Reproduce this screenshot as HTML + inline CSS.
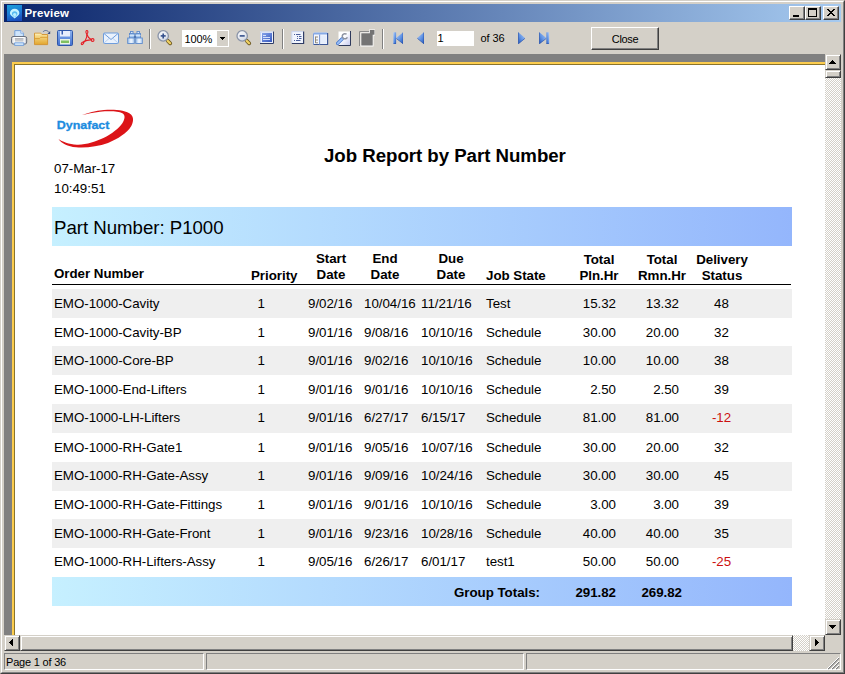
<!DOCTYPE html>
<html><head><meta charset="utf-8"><title>Preview</title>
<style>
*{box-sizing:border-box;margin:0;padding:0}
html,body{width:845px;height:674px;overflow:hidden;background:#d4d0c8}
body{position:relative;font-family:"Liberation Sans",sans-serif;font-size:11px;color:#000}
.abs{position:absolute}
#frame{position:absolute;left:0;top:0;width:845px;height:674px;border-style:solid;border-width:1px;border-color:#d4d0c8 #404040 #404040 #d4d0c8}
#frame2{position:absolute;left:1px;top:1px;width:843px;height:672px;border-style:solid;border-width:1px;border-color:#fff #808080 #808080 #fff}
#title{position:absolute;left:4px;top:4px;width:837px;height:18px;background:linear-gradient(to right,#0a246a,#a6caf0)}
#title .txt{position:absolute;left:20.500px;top:1px;font-weight:bold;font-size:11.500px;line-height:16px;color:#fff;letter-spacing:0.150px}
.cb{position:absolute;top:2px;width:16px;height:14px;background:#d4d0c8;border-style:solid;border-width:1px;border-color:#fff #404040 #404040 #fff;box-shadow:inset -1px -1px 0 #808080}
#tool{position:absolute;left:4px;top:22px;width:837px;height:32px;background:#d4d0c8}
.sep{position:absolute;top:29px;width:2px;height:20px;border-left:1px solid #808080;border-right:1px solid #fff}
.ic{position:absolute;top:30px;width:16px;height:16px}
.inp{position:absolute;background:#fff;border:1px solid #d4d0c8;font-size:11px}
#view{position:absolute;left:4px;top:54px;width:821px;height:581px;background:#808080;overflow:hidden}
#page{position:absolute;left:8px;top:8px;width:900px;height:700px;background:#fff;border:2px solid #fdcd4e;box-shadow:inset 1px 1px 0 #8a742c}
#rep{position:absolute;left:0;top:0;font-size:13.33px;color:#000}
.t{position:absolute;white-space:nowrap;line-height:16px;font-size:13.33px;letter-spacing:-0.03px}
.b{font-weight:bold}
.row{position:absolute;left:52px;width:740px;height:29px}
.g{background:#efefef}
.r{color:#cc1010}
</style></head><body>
<div id="frame"></div><div id="frame2"></div>
<div id="title">
 <svg class="abs" style="left:3px;top:1px" width="15" height="16" viewBox="0 0 15 16"><defs><linearGradient id="ig" x1="0.300" y1="0" x2="0.600" y2="1"><stop offset="0" stop-color="#1a9cd8"/><stop offset="0.500" stop-color="#1d7cd6"/><stop offset="1" stop-color="#1a4cbc"/></linearGradient></defs><rect width="15" height="16" fill="url(#ig)"/><path d="M2.900 8.300a4.750 4.500 0 0 1 9.500 0c0 1.800-2.400 3.200-4.750 5.100C5.300 11.500 2.900 10.100 2.900 8.300z" fill="#c4f2ff"/><path d="M4.900 9a2.750 2.700 0 0 1 5.500 0c0 1.100-1.400 2-2.750 3.300C6.300 11 4.900 10.100 4.900 9z" fill="#58baf0"/><path d="M6 9.600a1.650 1.600 0 0 1 3.300 0c0 .7-.8 1.500-1.650 2.500C6.800 11.100 6 10.300 6 9.600z" fill="#b8eeff"/></svg>
 <div class="txt">Preview</div>
 <div class="cb" style="left:785px"><div class="abs" style="left:3px;top:8px;width:6px;height:2px;background:#000"></div></div>
 <div class="cb" style="left:801px"><div class="abs" style="left:2px;top:1px;width:9px;height:9px;border:1px solid #000;border-top-width:2px"></div></div>
 <div class="cb" style="left:819px"><svg class="abs" style="left:3px;top:2px" width="8" height="7" viewBox="0 0 8 7"><path d="M0 0L7 7M1 0L8 7M7 0L0 7M8 0L1 7" stroke="#000" stroke-width="1" shape-rendering="crispEdges"/></svg></div>
</div>
<div id="tool"></div>
<!--ICONS-->
<svg width="0" height="0" class="abs"><defs><linearGradient id="gb" x1="0" y1="0" x2="1" y2="0"><stop offset="0" stop-color="#7db0f0"/><stop offset="1" stop-color="#1c5cc8"/></linearGradient><linearGradient id="gy" x1="0" y1="0" x2="0" y2="1"><stop offset="0" stop-color="#fbe9a6"/><stop offset="1" stop-color="#e2a52c"/></linearGradient><linearGradient id="gp" x1="0" y1="0" x2="0" y2="1"><stop offset="0" stop-color="#ffffff"/><stop offset="1" stop-color="#b9c6dc"/></linearGradient><linearGradient id="gs" x1="0" y1="0" x2="0" y2="1"><stop offset="0" stop-color="#8fb4ee"/><stop offset="1" stop-color="#3f6fd0"/></linearGradient></defs></svg>
<svg class="abs" style="left:10px;top:30px" width="18" height="16" viewBox="0 0 18 16"><defs><linearGradient id="gpr" x1="0" y1="0" x2="1" y2="0"><stop offset="0" stop-color="#c4c8d0"/><stop offset="0.180" stop-color="#ffffff"/><stop offset="0.820" stop-color="#ffffff"/><stop offset="1" stop-color="#b4b8c2"/></linearGradient></defs><path d="M4.800 7.500V0.600H10.800L13.400 3.200V7.500z" fill="#cfe5fc" stroke="#6c9ad8" stroke-width="0.900"/><path d="M10.800 0.600V3.200H13.400" fill="#eaf4fe" stroke="#6c9ad8" stroke-width="0.700"/><path d="M3 6.500H15.200Q16.700 6.500 16.700 8.500V12Q16.700 14 15.200 14H3Q1.500 14 1.500 12V8.500Q1.500 6.500 3 6.500z" fill="url(#gpr)" stroke="#5c6474" stroke-width="0.900"/><rect x="4.800" y="8.600" width="8.700" height="3" fill="#c6c8cc"/><path d="M4.800 8.600h8.700" stroke="#9a9ea8" stroke-width="0.700"/><path d="M4.600 12.800H13.800V15.400H4.600z" fill="#d4e9fd" stroke="#6c9ad8" stroke-width="0.900"/></svg>
<svg class="abs" style="left:34px;top:29px" width="18" height="17" viewBox="0 0 18 17"><path d="M0.500 4.200H6.800L8 5.500H13.600V15.600H0.500z" fill="url(#gy)" stroke="#d2922c" stroke-width="0.900"/><path d="M0.800 9.600H5.500L6.800 8.300H13.400" fill="none" stroke="#d89a30" stroke-width="0.900"/><path d="M1 5.200H6.500" stroke="#fdf0c0" stroke-width="0.800"/><path d="M9 3C10.200 1 13.200 0.800 15 3.400" fill="none" stroke="#5a6e98" stroke-width="1"/><path d="M16.200 2V5H13.400z" fill="#3a5084"/></svg>
<svg class="abs" style="left:57px;top:30px" width="16" height="16" viewBox="0 0 16 16"><path d="M0.5 1.5a1 1 0 0 1 1-1h13a1 1 0 0 1 1 1v13a1 1 0 0 1-1 1h-13a1 1 0 0 1-1-1z" fill="url(#gs)" stroke="#2f56a8" stroke-width="1"/><rect x="3" y="1" width="10" height="5.5" fill="#e8eefc"/><rect x="4.5" y="1" width="1.5" height="3.5" fill="#3b5fb0"/><rect x="3" y="9" width="10" height="5.5" fill="#e9f3e4"/><rect x="4" y="10.5" width="8" height="2.5" fill="#7fc060"/></svg>
<svg class="abs" style="left:80px;top:30px" width="16" height="16" viewBox="0 0 16 16"><g fill="none" stroke="#e51c23" stroke-width="1.100" stroke-linecap="round"><ellipse cx="6.900" cy="2" rx="1" ry="1.500"/><path d="M6.900 3.500C7.200 6.500 6.600 8.500 5.200 10.800L3.400 12.600"/><path d="M7 4.500C7.800 7.200 9.300 8.800 11.200 9.600"/><path d="M3.800 11.600C6.200 10.300 8.800 9.800 11.200 9.900"/><ellipse cx="2.500" cy="13.300" rx="1.500" ry="0.900" transform="rotate(-45 2.500 13.300)"/><circle cx="12.600" cy="10" r="1.400"/></g></svg>
<svg class="abs" style="left:103px;top:32px" width="16" height="12" viewBox="0 0 16 12"><rect x="0.5" y="1" width="15" height="10.5" rx="1" fill="#eaf2fd" stroke="#6f9ddc" stroke-width="1"/><path d="M1 1.5l7 6l7-6" fill="none" stroke="#6f9ddc" stroke-width="1"/><path d="M1 11l5-4.500M15 11l-5-4.500" fill="none" stroke="#a9c6ee" stroke-width="0.8"/></svg>
<svg class="abs" style="left:126px;top:30px" width="18" height="15" viewBox="0 0 18 15"><defs><linearGradient id="gbn" x1="0" y1="0" x2="1" y2="0"><stop offset="0" stop-color="#9cc0ec"/><stop offset="0.500" stop-color="#f2f8fe"/><stop offset="1" stop-color="#b4d0f2"/></linearGradient></defs><g stroke="#5f8ccc" stroke-width="0.900"><rect x="4.500" y="1.500" width="2.500" height="2" fill="#dcebfb"/><rect x="11" y="1.500" width="2.500" height="2" fill="#dcebfb"/><rect x="3.500" y="3.500" width="4.800" height="4.500" fill="#a4c6ee"/><rect x="9.700" y="3.500" width="4.800" height="4.500" fill="#a4c6ee"/><rect x="1.700" y="8" width="6.600" height="5.500" fill="url(#gbn)"/><rect x="9.700" y="8" width="6.600" height="5.500" fill="url(#gbn)"/></g><rect x="8.300" y="5.500" width="1.400" height="2.500" fill="#3f68a8"/><path d="M3.500 5.500h4.800M9.700 5.500h4.800" stroke="#dcebfb" stroke-width="0.800"/></svg>
<svg class="abs" style="left:156.5px;top:30px" width="16" height="16" viewBox="0 0 16 16"><defs><linearGradient id="gmp" x1="0" y1="0" x2="0.600" y2="1"><stop offset="0" stop-color="#ffffff"/><stop offset="1" stop-color="#d4dae6"/></linearGradient></defs><path d="M10.600 10.700l2.600 2.600" stroke="#6e5a24" stroke-width="3.800" stroke-linecap="round"/><path d="M10.600 10.700l2.500 2.500" stroke="#f0d264" stroke-width="2.200" stroke-linecap="round"/><circle cx="6.200" cy="5.900" r="5.200" fill="url(#gmp)" stroke="#8a94a8" stroke-width="1.300"/><path d="M3.700 5.900h5" stroke="#34508c" stroke-width="1.600"/><path d="M6.200 3.400v5" stroke="#34508c" stroke-width="1.600"/></svg>
<svg class="abs" style="left:236px;top:30px" width="16" height="16" viewBox="0 0 16 16"><defs><linearGradient id="gmm" x1="0" y1="0" x2="0.600" y2="1"><stop offset="0" stop-color="#ffffff"/><stop offset="1" stop-color="#d4dae6"/></linearGradient></defs><path d="M10.600 10.700l2.600 2.600" stroke="#6e5a24" stroke-width="3.800" stroke-linecap="round"/><path d="M10.600 10.700l2.500 2.500" stroke="#f0d264" stroke-width="2.200" stroke-linecap="round"/><circle cx="6.200" cy="5.900" r="5.200" fill="url(#gmm)" stroke="#8a94a8" stroke-width="1.300"/><path d="M3.700 5.900h5" stroke="#34508c" stroke-width="1.600"/></svg>
<svg class="abs" style="left:260px;top:31px" width="15" height="14" viewBox="0 0 15 14"><defs><linearGradient id="gf" x1="0" y1="0" x2="1" y2="1"><stop offset="0" stop-color="#86a4ea"/><stop offset="1" stop-color="#3456be"/></linearGradient></defs><rect x="0" y="0.500" width="14" height="12.500" fill="#eef2fc"/><path d="M13.500 0.500V12.500H0" fill="none" stroke="#2f3c66" stroke-width="1"/><path d="M0.500 12V1H13" fill="none" stroke="#c8d4f0" stroke-width="1"/><rect x="2" y="2" width="10" height="9" fill="url(#gf)"/><path d="M3 4.500h3M3 6.500h7M3 8.500h7" stroke="#d4e0fa" stroke-width="1"/></svg>
<svg class="abs" style="left:291px;top:31px" width="14" height="14" viewBox="0 0 14 14"><rect x="0.700" y="0.500" width="12" height="12" fill="#f0f4fd"/><path d="M12.600 0.500V12.500H0.800" fill="none" stroke="#2f3c66" stroke-width="1.200"/><path d="M0.800 12V0.600H12" fill="none" stroke="#c4d2f0" stroke-width="0.800"/><path d="M3 3.500h1M5 3.500h4.500M6 5.500h1M8 5.500h2.500M6 7.500h1M8 7.500h2.500M3 9.500h1M5 9.500h4.500" stroke="#4a5f9c" stroke-width="1"/></svg>
<svg class="abs" style="left:313px;top:32px" width="16" height="14" viewBox="0 0 16 14"><rect x="0.500" y="0.500" width="14.200" height="12" rx="1" fill="#f4f7fe"/><path d="M0.500 2.500V1.500a1 1 0 0 1 1-1H13.700a1 1 0 0 1 1 1V2.500z" fill="#86aae6"/><path d="M0.500 1.500V12.500" stroke="#7fa0dc" stroke-width="1" fill="none"/><path d="M14.600 1V12.500H0.600" fill="none" stroke="#3c5796" stroke-width="1.200"/><path d="M6.600 2.500v10" stroke="#7f9cd6" stroke-width="1.200"/><path d="M2.500 4.500v6.500M2.500 5h2.500M2.500 8h2.500M2.500 10.800h2.500" stroke="#8a8272" stroke-width="0.900" fill="none"/><rect x="8" y="3.500" width="5.500" height="8" fill="#e6eefc"/></svg>
<svg class="abs" style="left:336px;top:31px" width="16" height="15" viewBox="0 0 16 15"><defs><linearGradient id="gw" x1="0" y1="0" x2="1" y2="1"><stop offset="0.400" stop-color="#ffffff"/><stop offset="1" stop-color="#c4c8ee"/></linearGradient></defs><rect x="2.500" y="0.500" width="12" height="14" fill="url(#gw)"/><path d="M14.500 0V14.500H2.500" fill="none" stroke="#2f3a5c" stroke-width="1"/><path d="M1.600 12.400l4.600-4.600" stroke="#4a7ad0" stroke-width="3.400" stroke-linecap="round"/><path d="M1.700 12.300l4.500-4.500" stroke="#9cc0f6" stroke-width="1.800" stroke-linecap="round"/><path d="M10.600 3.300A2.600 2.600 0 1 0 11.300 6.200" fill="none" stroke="#8c92a0" stroke-width="1.500"/></svg>
<svg class="abs" style="left:359px;top:29px" width="17" height="18" viewBox="0 0 17 18"><path d="M0.500 17V2.500H10" fill="none" stroke="#8c8c8c" stroke-width="1"/><path d="M1.500 3.500H10V0.500H16V6.500H14.500V17.500H1.500z" fill="#fff"/><path d="M2.300 4.300H10.800V1H15.500V5.800H13.700V16.600H2.300z" fill="#747474"/></svg>
<svg width="0" height="0" class="abs"><defs><linearGradient id="gn" x1="0" y1="0" x2="1" y2="1"><stop offset="0" stop-color="#b4d0f8"/><stop offset="0.600" stop-color="#5a8ee2"/><stop offset="1" stop-color="#2454b4"/></linearGradient></defs></svg>
<svg class="abs" style="left:392.8px;top:31.8px" width="10.5" height="12.2" viewBox="0 0 10.5 12.2"><g><rect x="0.300" y="0.300" width="2.800" height="11.600" fill="url(#gn)"/><path d="M10.200 0.300v11.600L3.100 6.100z" fill="url(#gn)"/><path d="M10.100 0.500v11.300M3.300 6.500l6.800 5.300M0.500 11.700h2.500" stroke="#2450ae" stroke-width="0.700" fill="none"/></g></svg>
<svg class="abs" style="left:417px;top:31.8px" width="7.3" height="12.2" viewBox="0 0 7.3 12.2"><g><path d="M7 0.300v11.600L0.200 6.100z" fill="url(#gn)"/><path d="M6.900 0.500v11.300M0.400 6.400l6.500 5.400" stroke="#2450ae" stroke-width="0.700" fill="none"/></g></svg>
<svg class="abs" style="left:518px;top:31.8px" width="7.3" height="12.2" viewBox="0 0 7.3 12.2"><g transform="translate(7.3,0) scale(-1,1)"><path d="M7 0.300v11.600L0.200 6.100z" fill="url(#gn)"/><path d="M6.900 0.500v11.300M0.400 6.400l6.500 5.400" stroke="#2450ae" stroke-width="0.700" fill="none"/></g></svg>
<svg class="abs" style="left:539px;top:31.8px" width="10.5" height="12.2" viewBox="0 0 10.5 12.2"><g transform="translate(10.5,0) scale(-1,1)"><rect x="0.300" y="0.300" width="2.800" height="11.600" fill="url(#gn)"/><path d="M10.200 0.300v11.600L3.100 6.100z" fill="url(#gn)"/><path d="M10.100 0.500v11.300M3.300 6.500l6.800 5.300M0.500 11.700h2.500" stroke="#2450ae" stroke-width="0.700" fill="none"/></g></svg>
<div class="sep" style="left:149px"></div>
<div class="sep" style="left:281.5px"></div>
<div class="sep" style="left:382px"></div>
<div class="abs" style="left:182px;top:30px;width:47px;height:17px;background:#fff"><span class="abs" style="left:2.500px;top:2px;line-height:14px;font-size:11px;letter-spacing:-0.150px">100%</span><div class="abs" style="left:35px;top:1px;width:11px;height:15px;background:#d4d0c8"></div><svg class="abs" style="left:38px;top:7px" width="5" height="3" viewBox="0 0 5 3" shape-rendering="crispEdges"><path d="M0 0h5v1h-5zM1 1h3v1h-3zM2 2h1v1h-1z" fill="#000"/></svg></div>
<div class="inp" style="left:437px;top:31px;width:37px;height:15px;border:0"><span class="abs" style="left:0.500px;top:0px;line-height:15px;font-size:11px">1</span></div>
<div class="abs" style="left:480.500px;top:31px;line-height:15px;font-size:11px;letter-spacing:-0.100px">of 36</div>
<div class="abs" style="left:591px;top:27px;width:68px;height:23px;background:#d4d0c8;border-style:solid;border-width:1px;border-color:#fff #404040 #404040 #fff;box-shadow:inset -1px -1px 0 #808080;text-align:center;line-height:23px;font-size:11px;letter-spacing:-0.350px">Close</div>
<!--/ICONS-->
<div id="view">
 <div id="page"></div>
</div>
<!--REPORT-->
<svg class="abs" style="left:50px;top:100px" width="100" height="56" viewBox="50 100 100 56"><path d="M82 115C88 113 95 110.800 104 110C114 109.200 126 110 131 114.500C134 117.500 133.500 122 131 126.600C127 133 118 139 108 143C98 146.500 86 148 76 147.200C68 146.500 61 143 58.500 138.900C62 141.500 69 144.300 77 144.700C86 145 96 141.500 104 137.800C112 134 119 128 122.500 123C125 119 125.500 115 122.400 113.300C118 110.800 108 111.200 100 111.700C93 112.400 87 113.800 82 115Z" fill="#dc1418"/><text x="56.700" y="129.300" font-family="Liberation Sans, sans-serif" font-weight="bold" font-size="11.300" fill="#1c8ce0" stroke="#1c8ce0" stroke-width="0.300" textLength="52.800" lengthAdjust="spacingAndGlyphs">Dynafact</text></svg>
<div class="t " style="top:161.38px;line-height:16px;left:54px;">07-Mar-17</div>
<div class="t " style="top:181.38px;line-height:16px;left:54px;">10:49:51</div>
<div class="t b" style="top:144.83px;line-height:22px;font-size:18.67px;left:324px;">Job Report by Part Number</div>
<div class="abs" style="left:52px;top:207px;width:740px;height:39px;background:linear-gradient(to right,#c6f0ff,#94b6fc)"></div>
<div class="t " style="top:216.83px;line-height:22px;font-size:18.67px;left:54px;">Part Number: P1000</div>
<div class="t b" style="top:266.38px;line-height:16px;left:54px;">Order Number</div>
<div class="t b" style="top:268.38px;line-height:16px;left:251px;">Priority</div>
<div class="t b" style="top:251.38px;line-height:16px;left:231px;width:200px;text-align:center;">Start</div>
<div class="t b" style="top:267.38px;line-height:16px;left:231px;width:200px;text-align:center;">Date</div>
<div class="t b" style="top:251.38px;line-height:16px;left:285px;width:200px;text-align:center;">End</div>
<div class="t b" style="top:267.38px;line-height:16px;left:285px;width:200px;text-align:center;">Date</div>
<div class="t b" style="top:251.38px;line-height:16px;left:351px;width:200px;text-align:center;">Due</div>
<div class="t b" style="top:267.38px;line-height:16px;left:351px;width:200px;text-align:center;">Date</div>
<div class="t b" style="top:268.38px;line-height:16px;left:486px;">Job State</div>
<div class="t b" style="top:252.38px;line-height:16px;left:499px;width:200px;text-align:center;">Total</div>
<div class="t b" style="top:268.38px;line-height:16px;left:499px;width:200px;text-align:center;">Pln.Hr</div>
<div class="t b" style="top:252.38px;line-height:16px;left:562px;width:200px;text-align:center;">Total</div>
<div class="t b" style="top:268.38px;line-height:16px;left:562px;width:200px;text-align:center;">Rmn.Hr</div>
<div class="t b" style="top:252.38px;line-height:16px;left:622px;width:200px;text-align:center;">Delivery</div>
<div class="t b" style="top:268.38px;line-height:16px;left:622px;width:200px;text-align:center;">Status</div>
<div class="abs" style="left:52px;top:284px;width:739px;height:1px;background:#000"></div>
<div class="row g" style="top:289px;height:29px"></div>
<div class="t " style="top:296.38px;line-height:16px;left:54px;">EMO-1000-Cavity</div>
<div class="t " style="top:296.38px;line-height:16px;left:257.5px;">1</div>
<div class="t " style="top:296.38px;line-height:16px;left:308px;">9/02/16</div>
<div class="t " style="top:296.38px;line-height:16px;left:364px;">10/04/16</div>
<div class="t " style="top:296.38px;line-height:16px;left:421px;">11/21/16</div>
<div class="t " style="top:296.38px;line-height:16px;left:486px;">Test</div>
<div class="t " style="top:296.38px;line-height:16px;right:229px;">15.32</div>
<div class="t " style="top:296.38px;line-height:16px;right:166px;">13.32</div>
<div class="t " style="top:296.38px;line-height:16px;left:621.5px;width:200px;text-align:center;">48</div>
<div class="t " style="top:325.38px;line-height:16px;left:54px;">EMO-1000-Cavity-BP</div>
<div class="t " style="top:325.38px;line-height:16px;left:257.5px;">1</div>
<div class="t " style="top:325.38px;line-height:16px;left:308px;">9/01/16</div>
<div class="t " style="top:325.38px;line-height:16px;left:364px;">9/08/16</div>
<div class="t " style="top:325.38px;line-height:16px;left:421px;">10/10/16</div>
<div class="t " style="top:325.38px;line-height:16px;left:486px;">Schedule</div>
<div class="t " style="top:325.38px;line-height:16px;right:229px;">30.00</div>
<div class="t " style="top:325.38px;line-height:16px;right:166px;">20.00</div>
<div class="t " style="top:325.38px;line-height:16px;left:621.5px;width:200px;text-align:center;">32</div>
<div class="row g" style="top:346px;height:29px"></div>
<div class="t " style="top:353.38px;line-height:16px;left:54px;">EMO-1000-Core-BP</div>
<div class="t " style="top:353.38px;line-height:16px;left:257.5px;">1</div>
<div class="t " style="top:353.38px;line-height:16px;left:308px;">9/01/16</div>
<div class="t " style="top:353.38px;line-height:16px;left:364px;">9/02/16</div>
<div class="t " style="top:353.38px;line-height:16px;left:421px;">10/10/16</div>
<div class="t " style="top:353.38px;line-height:16px;left:486px;">Schedule</div>
<div class="t " style="top:353.38px;line-height:16px;right:229px;">10.00</div>
<div class="t " style="top:353.38px;line-height:16px;right:166px;">10.00</div>
<div class="t " style="top:353.38px;line-height:16px;left:621.5px;width:200px;text-align:center;">38</div>
<div class="t " style="top:382.38px;line-height:16px;left:54px;">EMO-1000-End-Lifters</div>
<div class="t " style="top:382.38px;line-height:16px;left:257.5px;">1</div>
<div class="t " style="top:382.38px;line-height:16px;left:308px;">9/01/16</div>
<div class="t " style="top:382.38px;line-height:16px;left:364px;">9/01/16</div>
<div class="t " style="top:382.38px;line-height:16px;left:421px;">10/10/16</div>
<div class="t " style="top:382.38px;line-height:16px;left:486px;">Schedule</div>
<div class="t " style="top:382.38px;line-height:16px;right:229px;">2.50</div>
<div class="t " style="top:382.38px;line-height:16px;right:166px;">2.50</div>
<div class="t " style="top:382.38px;line-height:16px;left:621.5px;width:200px;text-align:center;">39</div>
<div class="row g" style="top:404px;height:29px"></div>
<div class="t " style="top:410.38px;line-height:16px;left:54px;">EMO-1000-LH-Lifters</div>
<div class="t " style="top:410.38px;line-height:16px;left:257.5px;">1</div>
<div class="t " style="top:410.38px;line-height:16px;left:308px;">9/01/16</div>
<div class="t " style="top:410.38px;line-height:16px;left:364px;">6/27/17</div>
<div class="t " style="top:410.38px;line-height:16px;left:421px;">6/15/17</div>
<div class="t " style="top:410.38px;line-height:16px;left:486px;">Schedule</div>
<div class="t " style="top:410.38px;line-height:16px;right:229px;">81.00</div>
<div class="t " style="top:410.38px;line-height:16px;right:166px;">81.00</div>
<div class="t r" style="top:410.38px;line-height:16px;left:621.5px;width:200px;text-align:center;">-12</div>
<div class="t " style="top:440.38px;line-height:16px;left:54px;">EMO-1000-RH-Gate1</div>
<div class="t " style="top:440.38px;line-height:16px;left:257.5px;">1</div>
<div class="t " style="top:440.38px;line-height:16px;left:308px;">9/01/16</div>
<div class="t " style="top:440.38px;line-height:16px;left:364px;">9/05/16</div>
<div class="t " style="top:440.38px;line-height:16px;left:421px;">10/07/16</div>
<div class="t " style="top:440.38px;line-height:16px;left:486px;">Schedule</div>
<div class="t " style="top:440.38px;line-height:16px;right:229px;">30.00</div>
<div class="t " style="top:440.38px;line-height:16px;right:166px;">20.00</div>
<div class="t " style="top:440.38px;line-height:16px;left:621.5px;width:200px;text-align:center;">32</div>
<div class="row g" style="top:462px;height:29px"></div>
<div class="t " style="top:468.38px;line-height:16px;left:54px;">EMO-1000-RH-Gate-Assy</div>
<div class="t " style="top:468.38px;line-height:16px;left:257.5px;">1</div>
<div class="t " style="top:468.38px;line-height:16px;left:308px;">9/01/16</div>
<div class="t " style="top:468.38px;line-height:16px;left:364px;">9/09/16</div>
<div class="t " style="top:468.38px;line-height:16px;left:421px;">10/24/16</div>
<div class="t " style="top:468.38px;line-height:16px;left:486px;">Schedule</div>
<div class="t " style="top:468.38px;line-height:16px;right:229px;">30.00</div>
<div class="t " style="top:468.38px;line-height:16px;right:166px;">30.00</div>
<div class="t " style="top:468.38px;line-height:16px;left:621.5px;width:200px;text-align:center;">45</div>
<div class="t " style="top:497.38px;line-height:16px;left:54px;">EMO-1000-RH-Gate-Fittings</div>
<div class="t " style="top:497.38px;line-height:16px;left:257.5px;">1</div>
<div class="t " style="top:497.38px;line-height:16px;left:308px;">9/01/16</div>
<div class="t " style="top:497.38px;line-height:16px;left:364px;">9/01/16</div>
<div class="t " style="top:497.38px;line-height:16px;left:421px;">10/10/16</div>
<div class="t " style="top:497.38px;line-height:16px;left:486px;">Schedule</div>
<div class="t " style="top:497.38px;line-height:16px;right:229px;">3.00</div>
<div class="t " style="top:497.38px;line-height:16px;right:166px;">3.00</div>
<div class="t " style="top:497.38px;line-height:16px;left:621.5px;width:200px;text-align:center;">39</div>
<div class="row g" style="top:519px;height:29px"></div>
<div class="t " style="top:526.38px;line-height:16px;left:54px;">EMO-1000-RH-Gate-Front</div>
<div class="t " style="top:526.38px;line-height:16px;left:257.5px;">1</div>
<div class="t " style="top:526.38px;line-height:16px;left:308px;">9/01/16</div>
<div class="t " style="top:526.38px;line-height:16px;left:364px;">9/23/16</div>
<div class="t " style="top:526.38px;line-height:16px;left:421px;">10/28/16</div>
<div class="t " style="top:526.38px;line-height:16px;left:486px;">Schedule</div>
<div class="t " style="top:526.38px;line-height:16px;right:229px;">40.00</div>
<div class="t " style="top:526.38px;line-height:16px;right:166px;">40.00</div>
<div class="t " style="top:526.38px;line-height:16px;left:621.5px;width:200px;text-align:center;">35</div>
<div class="t " style="top:554.38px;line-height:16px;left:54px;">EMO-1000-RH-Lifters-Assy</div>
<div class="t " style="top:554.38px;line-height:16px;left:257.5px;">1</div>
<div class="t " style="top:554.38px;line-height:16px;left:308px;">9/05/16</div>
<div class="t " style="top:554.38px;line-height:16px;left:364px;">6/26/17</div>
<div class="t " style="top:554.38px;line-height:16px;left:421px;">6/01/17</div>
<div class="t " style="top:554.38px;line-height:16px;left:486px;">test1</div>
<div class="t " style="top:554.38px;line-height:16px;right:229px;">50.00</div>
<div class="t " style="top:554.38px;line-height:16px;right:166px;">50.00</div>
<div class="t r" style="top:554.38px;line-height:16px;left:621.5px;width:200px;text-align:center;">-25</div>
<div class="abs" style="left:52px;top:577px;width:740px;height:29px;background:linear-gradient(to right,#c6f0ff,#94b6fc)"></div>
<div class="t b" style="top:585.38px;line-height:16px;right:305px;">Group Totals:</div>
<div class="t b" style="top:585.38px;line-height:16px;right:229px;">291.82</div>
<div class="t b" style="top:585.38px;line-height:16px;right:163px;">269.82</div>
<!--/REPORT-->
<!--SCROLL-->
<div class="abs" style="left:825px;top:54px;width:16px;height:581px;background:repeating-conic-gradient(#fff 0 25%,#d4d0c8 0 50%) 0 0/2px 2px;"></div>
<div class="abs" style="left:825px;top:54px;width:16px;height:16px;background:#d4d0c8;border-style:solid;border-width:1px;border-color:#d4d0c8 #404040 #404040 #d4d0c8;box-shadow:inset 1px 1px 0 #fff,inset -1px -1px 0 #808080;"><svg class="abs" style="left:3px;top:5px" width="7" height="4" viewBox="0 0 7 4" shape-rendering="crispEdges"><path d="M3 0h1v1h-1zM2 1h3v1h-3zM1 2h5v1h-5zM0 3h7v1h-7z" fill="#000"/></svg></div>
<div class="abs" style="left:825px;top:70px;width:16px;height:8px;background:#d4d0c8;border-style:solid;border-width:1px;border-color:#d4d0c8 #404040 #404040 #d4d0c8;box-shadow:inset 1px 1px 0 #fff,inset -1px -1px 0 #808080;"></div>
<div class="abs" style="left:825px;top:619px;width:16px;height:16px;background:#d4d0c8;border-style:solid;border-width:1px;border-color:#d4d0c8 #404040 #404040 #d4d0c8;box-shadow:inset 1px 1px 0 #fff,inset -1px -1px 0 #808080;"><svg class="abs" style="left:3px;top:5px" width="7" height="4" viewBox="0 0 7 4" shape-rendering="crispEdges"><path d="M0 0h7v1h-7zM1 1h5v1h-5zM2 2h3v1h-3zM3 3h1v1h-1z" fill="#000"/></svg></div>
<div class="abs" style="left:4px;top:635px;width:821px;height:16px;background:repeating-conic-gradient(#fff 0 25%,#d4d0c8 0 50%) 0 0/2px 2px;"></div>
<div class="abs" style="left:4px;top:635px;width:16px;height:16px;background:#d4d0c8;border-style:solid;border-width:1px;border-color:#d4d0c8 #404040 #404040 #d4d0c8;box-shadow:inset 1px 1px 0 #fff,inset -1px -1px 0 #808080;"><svg class="abs" style="left:4px;top:3px" width="4" height="7" viewBox="0 0 4 7" shape-rendering="crispEdges"><path d="M3 0h1v7h-1zM2 1h1v5h-1zM1 2h1v3h-1zM0 3h1v1h-1z" fill="#000"/></svg></div>
<div class="abs" style="left:20px;top:635px;width:773px;height:16px;background:#d4d0c8;border-style:solid;border-width:1px;border-color:#d4d0c8 #404040 #404040 #d4d0c8;box-shadow:inset 1px 1px 0 #fff,inset -1px -1px 0 #808080;"></div>
<div class="abs" style="left:809px;top:635px;width:16px;height:16px;background:#d4d0c8;border-style:solid;border-width:1px;border-color:#d4d0c8 #404040 #404040 #d4d0c8;box-shadow:inset 1px 1px 0 #fff,inset -1px -1px 0 #808080;"><svg class="abs" style="left:5px;top:3px" width="4" height="7" viewBox="0 0 4 7" shape-rendering="crispEdges"><path d="M0 0h1v7h-1zM1 1h1v5h-1zM2 2h1v3h-1zM3 3h1v1h-1z" fill="#000"/></svg></div>
<div class="abs" style="left:825px;top:635px;width:16px;height:16px;background:#d4d0c8"></div>
<!--/SCROLL-->
<!--STATUS-->
<div class="abs" style="left:4px;top:653px;width:200px;height:17px;border-style:solid;border-width:1px;border-color:#808080 #fff #fff #808080;"><span class="abs" style="left:1px;top:1px;line-height:14px;font-size:11px;letter-spacing:-0.200px">Page 1 of 36</span></div>
<div class="abs" style="left:206px;top:653px;width:318px;height:17px;border-style:solid;border-width:1px;border-color:#808080 #fff #fff #808080;"></div>
<div class="abs" style="left:526px;top:653px;width:315px;height:17px;border-style:solid;border-width:1px;border-color:#808080 #fff #fff #808080;"></div>
<svg class="abs" style="left:827px;top:657px" width="13" height="13" viewBox="0 0 13 13"><path d="M12 1L1 12M12 5L5 12M12 9L9 12" stroke="#808080" stroke-width="1.400"/><path d="M12 0L0 12M12 4L4 12M12 8L8 12" stroke="#fff" stroke-width="1"/></svg>
<!--/STATUS-->
</body></html>
